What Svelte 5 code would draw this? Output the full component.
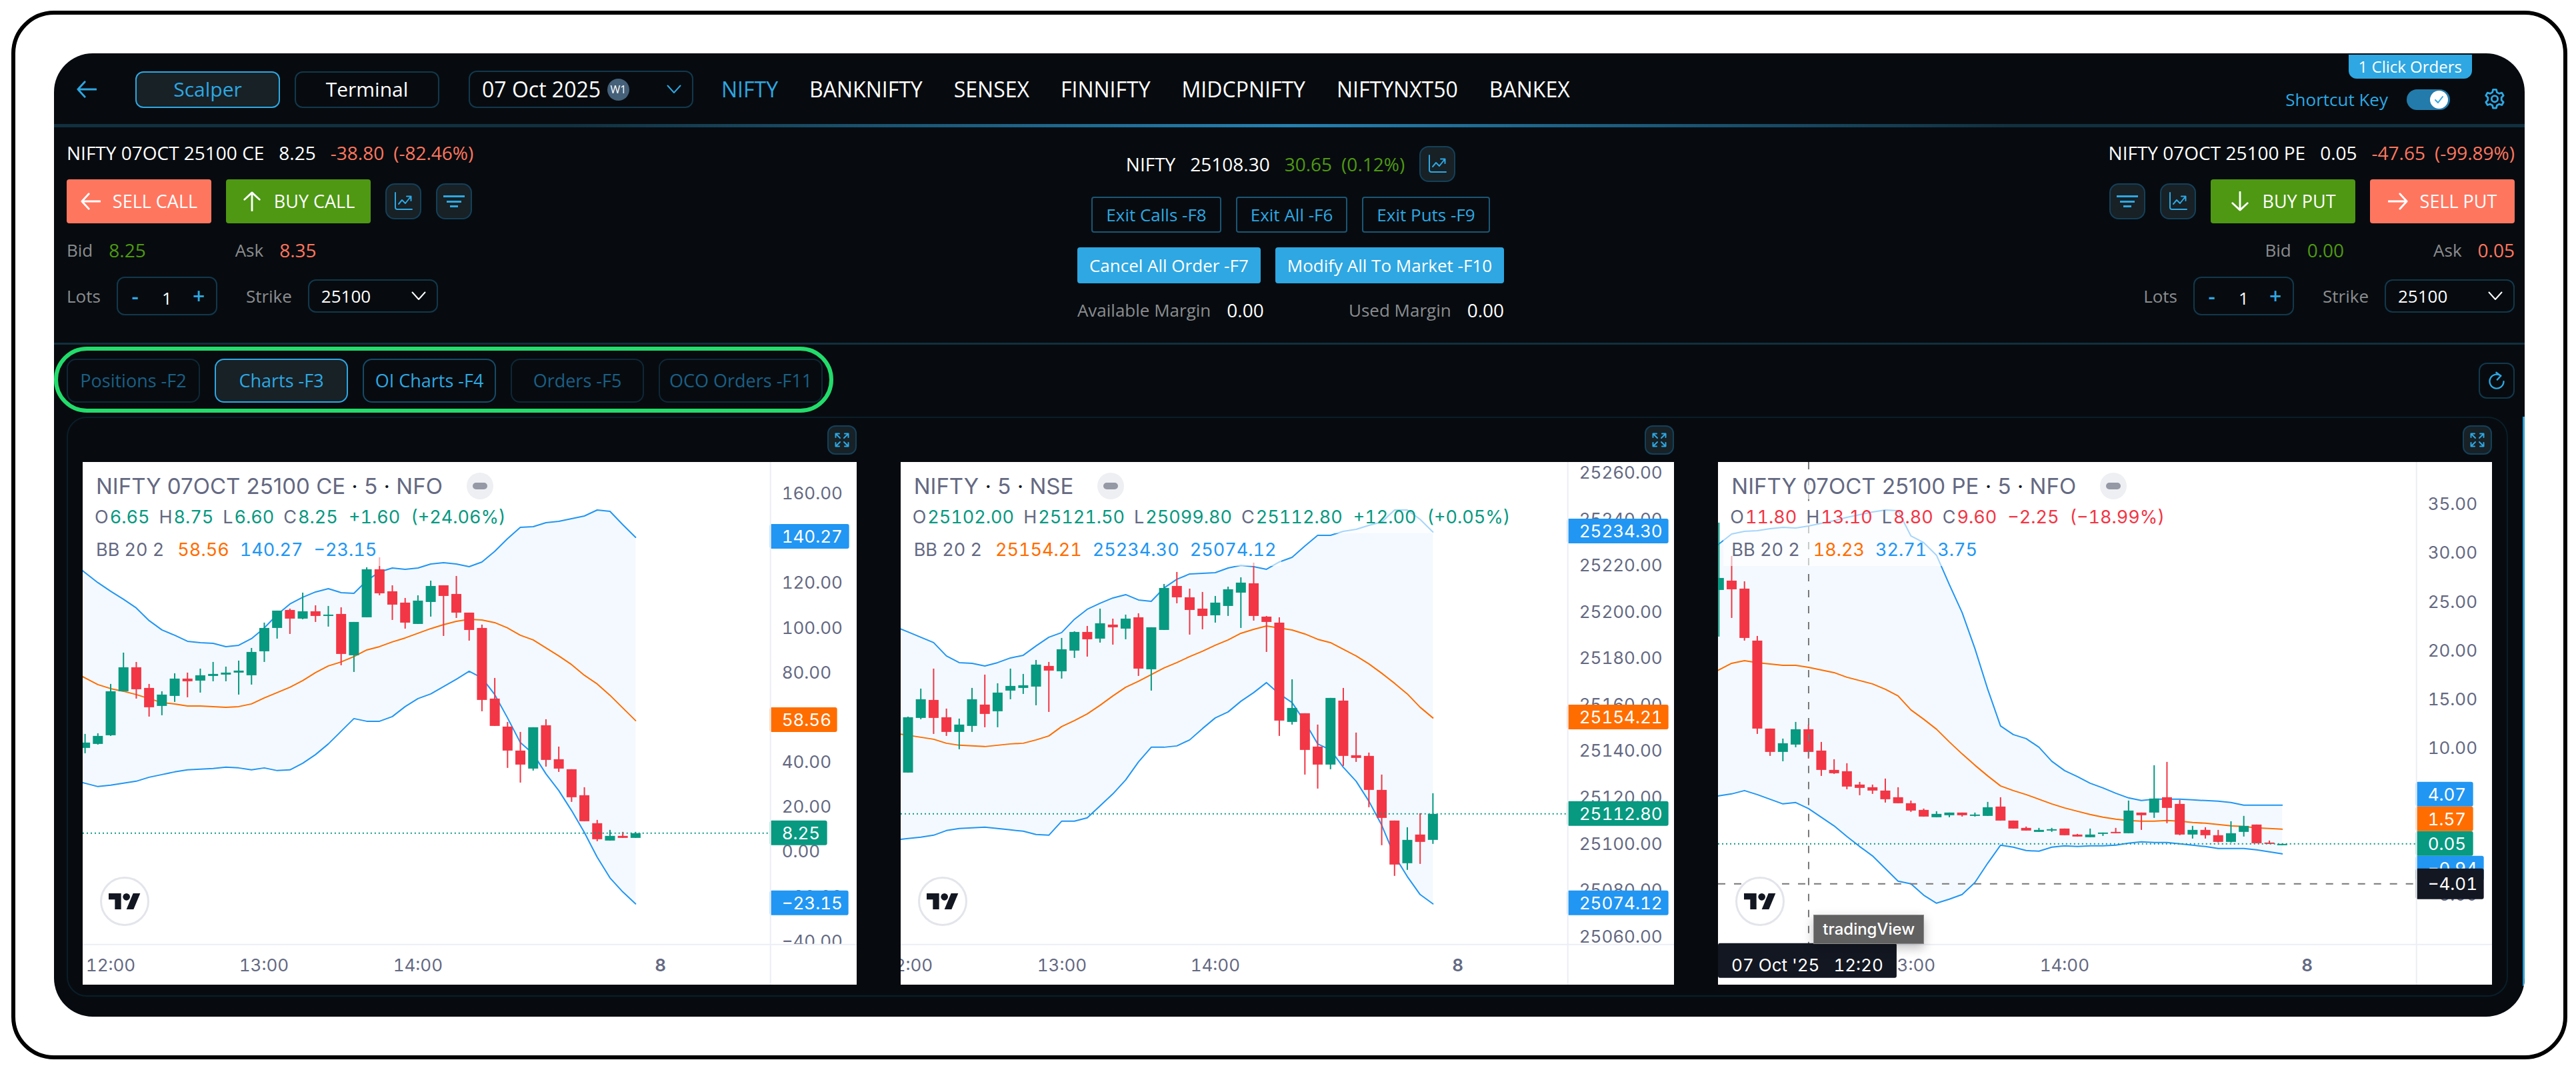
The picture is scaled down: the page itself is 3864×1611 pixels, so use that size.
<script lang="ts">
	type Candle = [dir: 'u' | 'd', high: number, top: number, bottom: number, low: number];
	type Tag = { y: number; text: string; color: string; w: number };

	interface Chart {
		id: string;
		title: string;
		market: string;
		trend: 'up' | 'down';
		ohlc: [string, string][];
		change: string[];
		bb: [string, string, string];
		start: number;
		axisX: number;
		price: number;
		candles: Candle[];
		upper: number[];
		middle: number[];
		lower: number[];
		labels: { y: number; text: string }[];
		tags: Tag[];
		times: { x: number; text: string; bold?: boolean }[];
		cursor?: { x: number; y: number; time: string; price: string };
	}

	const BAR = 19.21;
	const BLUE = '#2196f3';
	const ORANGE = '#ff6d00';
	const GREEN = '#089981';
	const RED = '#f23645';

	const symbols = ['NIFTY', 'BANKNIFTY', 'SENSEX', 'FINNIFTY', 'MIDCPNIFTY', 'NIFTYNXT50', 'BANKEX'];

	const tabs = [
		{ label: 'Positions -F2', state: 'dim' },
		{ label: 'Charts -F3', state: 'active' },
		{ label: 'OI Charts -F4', state: 'ready' },
		{ label: 'Orders -F5', state: 'dim' },
		{ label: 'OCO Orders -F11', state: 'dim' }
	];

	const call = { id: 'call', name: 'NIFTY 07OCT 25100 CE', ltp: '8.25', diff: '-38.80', pct: '(-82.46%)', bid: '8.25', ask: '8.35' };
	const put = { id: 'put', name: 'NIFTY 07OCT 25100 PE', ltp: '0.05', diff: '-47.65', pct: '(-99.89%)', bid: '0.00', ask: '0.05' };

	let symbol = $state('NIFTY');
	let tab = $state('Charts -F3');
	let shortcuts = $state(true);
	let lots = $state({ call: 1, put: 1 } as Record<string, number>);

	function scale(from: number, to: number, step: number, y: number, px: number) {
		const out = [];
		for (let v = from; v >= to; v -= step) {
			out.push({ y: y + ((from - v) / step) * px, text: v.toFixed(2).replace('-', '−') });
		}
		return out;
	}

	const charts: Chart[] = [
		{
			id: 'ce',
			title: 'NIFTY 07OCT 25100 CE',
			market: 'NFO',
			trend: 'up',
			ohlc: [['O', '6.65'], ['H', '8.75'], ['L', '6.60'], ['C', '8.25']],
			change: ['+1.60', '(+24.06%)'],
			bb: ['58.56', '140.27', '−23.15'],
			start: 3.6,
			axisX: 1032,
			price: 557,
			candles: [
				['u', 408, 421, 429, 437], ['u', 407, 411, 423, 424], ['u', 333, 344, 410, 411], ['u', 286, 308, 344, 344],
				['d', 300, 308, 341, 355], ['d', 333, 339, 368, 382], ['u', 344, 349, 366, 380], ['u', 317, 325, 351, 360],
				['d', 316, 325, 329, 353], ['u', 310, 320, 328, 346], ['u', 300, 318, 321, 329], ['u', 307, 316, 319, 329],
				['u', 298, 313, 316, 349], ['u', 279, 285, 320, 334], ['u', 241, 249, 284, 300], ['u', 223, 223, 249, 265],
				['d', 220, 222, 235, 258], ['u', 196, 224, 235, 236], ['d', 215, 224, 231, 240], ['u', 216, 229, 231, 247],
				['d', 218, 228, 288, 305], ['u', 240, 240, 290, 315], ['u', 158, 161, 233, 233], ['d', 143, 161, 197, 200],
				['d', 185, 194, 214, 237], ['d', 204, 211, 241, 250], ['u', 200, 208, 243, 243], ['u', 178, 186, 210, 232],
				['d', 185, 185, 201, 261], ['d', 171, 198, 226, 234], ['d', 226, 226, 252, 268], ['d', 244, 249, 357, 374],
				['d', 324, 355, 396, 396], ['d', 390, 397, 433, 459], ['d', 405, 433, 454, 481], ['u', 398, 398, 460, 463],
				['d', 386, 395, 447, 457], ['d', 427, 446, 460, 465], ['d', 461, 461, 503, 510], ['d', 488, 500, 539, 539],
				['d', 537, 542, 566, 569], ['u', 552, 561, 568, 568], ['d', 555, 561, 564, 564], ['u', 555, 557, 564, 564]
			],
			upper: [
				166, 181, 194, 206, 219, 238, 252, 260, 269, 271, 272, 277, 275, 265, 249, 229, 213, 203, 195, 190, 196, 197,
				178, 165, 159, 161, 159, 153, 151, 153, 157, 150, 134, 115, 98, 97, 91, 89, 85, 81, 72, 74, 94, 113
			],
			middle: [
				324, 334, 340, 344, 349, 355, 361, 363, 366, 366, 367, 368, 367, 363, 354, 346, 338, 328, 316, 306, 300, 292,
				282, 277, 270, 264, 257, 250, 244, 239, 236, 237, 241, 249, 260, 267, 279, 291, 304, 320, 333, 350, 369, 388
			],
			lower: [
				482, 487, 485, 482, 479, 473, 469, 465, 462, 461, 460, 458, 459, 462, 459, 463, 462, 452, 439, 423, 404, 385,
				389, 389, 382, 367, 355, 348, 337, 326, 314, 324, 349, 384, 421, 438, 468, 493, 523, 556, 593, 624, 645, 663
			],
			labels: scale(160, -40, 20, 47, 67.2),
			tags: [
				{ y: 112, text: '140.27', color: BLUE, w: 119 },
				{ y: 387, text: '58.56', color: ORANGE, w: 101 },
				{ y: 557, text: '8.25', color: GREEN, w: 86 },
				{ y: 662, text: '−23.15', color: BLUE, w: 118 }
			],
			times: [{ x: 42, text: '12:00' }, { x: 272, text: '13:00' }, { x: 503, text: '14:00' }, { x: 867, text: '8', bold: true }]
		},
		{
			id: 'index',
			title: 'NIFTY',
			market: 'NSE',
			trend: 'up',
			ohlc: [['O', '25102.00'], ['H', '25121.50'], ['L', '25099.80'], ['C', '25112.80']],
			change: ['+12.00', '(+0.05%)'],
			bb: ['25154.21', '25234.30', '25074.12'],
			start: 11,
			axisX: 1001,
			price: 528,
			candles: [
				['u', 382, 383, 466, 466], ['u', 340, 356, 384, 386], ['d', 310, 357, 384, 408], ['d', 370, 383, 405, 411],
				['u', 385, 394, 405, 431], ['u', 339, 356, 396, 405], ['d', 319, 364, 378, 398], ['u', 332, 346, 374, 398],
				['u', 310, 336, 343, 356], ['u', 318, 335, 339, 348], ['u', 297, 304, 337, 365], ['d', 300, 306, 313, 375],
				['u', 264, 281, 314, 325], ['u', 254, 255, 283, 294], ['d', 246, 255, 266, 292], ['u', 220, 242, 265, 271],
				['d', 235, 244, 248, 274], ['u', 229, 235, 250, 266], ['d', 227, 233, 310, 321], ['u', 248, 248, 311, 343],
				['u', 183, 189, 252, 252], ['d', 165, 186, 203, 212], ['d', 190, 203, 222, 259], ['d', 195, 220, 231, 251],
				['u', 201, 211, 230, 241], ['u', 187, 191, 216, 231], ['u', 173, 181, 196, 249], ['d', 151, 182, 231, 238],
				['d', 231, 232, 240, 285], ['d', 233, 241, 388, 411], ['u', 326, 369, 390, 394], ['d', 377, 377, 432, 469],
				['d', 394, 427, 454, 490], ['u', 354, 354, 454, 461], ['d', 339, 358, 441, 456], ['d', 406, 440, 444, 450],
				['d', 436, 441, 492, 518], ['d', 469, 492, 534, 575], ['d', 538, 538, 604, 621], ['u', 548, 567, 602, 612],
				['d', 527, 559, 570, 603], ['u', 497, 528, 567, 573]
			],
			upper: [
				255, 263, 271, 291, 301, 302, 306, 301, 294, 290, 276, 263, 256, 236, 221, 212, 204, 199, 207, 209, 189, 176,
				168, 167, 166, 159, 155, 157, 161, 150, 143, 126, 110, 110, 104, 101, 95, 90, 72, 72, 86, 105
			],
			middle: [
				410, 413, 416, 422, 425, 426, 427, 425, 423, 422, 417, 411, 397, 388, 378, 365, 351, 338, 329, 319, 309, 301,
				292, 284, 275, 267, 257, 251, 246, 249, 252, 258, 266, 271, 281, 291, 303, 317, 332, 348, 368, 384
			],
			lower: [
				565, 563, 560, 553, 550, 549, 548, 550, 552, 554, 559, 560, 539, 539, 534, 516, 498, 477, 450, 428, 428, 426,
				417, 400, 384, 375, 359, 346, 331, 348, 361, 390, 423, 432, 458, 479, 509, 545, 591, 622, 649, 663
			],
			labels: scale(25260, 25060, 20, 16, 69.6),
			tags: [
				{ y: 104, text: '25234.30', color: BLUE, w: 152 },
				{ y: 383, text: '25154.21', color: ORANGE, w: 152 },
				{ y: 528, text: '25112.80', color: GREEN, w: 152 },
				{ y: 662, text: '25074.12', color: BLUE, w: 152 }
			],
			times: [{ x: 11, text: '12:00' }, { x: 242, text: '13:00' }, { x: 472, text: '14:00' }, { x: 836, text: '8', bold: true }]
		},
		{
			id: 'pe',
			title: 'NIFTY 07OCT 25100 PE',
			market: 'NFO',
			trend: 'down',
			ohlc: [['O', '11.80'], ['H', '13.10'], ['L', '8.80'], ['C', '9.60']],
			change: ['−2.25', '(−18.99%)'],
			bb: ['18.23', '32.71', '3.75'],
			start: 1.3,
			axisX: 1048,
			price: 573,
			candles: [
				['u', 91, 174, 192, 262], ['d', 141, 178, 191, 234], ['d', 179, 190, 264, 268], ['d', 261, 268, 400, 408],
				['d', 400, 400, 435, 441], ['u', 415, 422, 435, 449], ['u', 390, 401, 424, 428], ['d', 394, 401, 435, 445],
				['d', 420, 433, 462, 471], ['d', 446, 462, 467, 468], ['d', 452, 464, 487, 491], ['d', 480, 484, 489, 500],
				['d', 484, 488, 493, 498], ['d', 475, 493, 506, 511], ['d', 488, 503, 512, 512], ['d', 508, 512, 523, 525],
				['d', 520, 522, 532, 532], ['u', 524, 528, 533, 533], ['u', 526, 526, 530, 533], ['d', 526, 526, 530, 532],
				['u', 526, 529, 531, 532], ['u', 510, 518, 531, 531], ['d', 503, 517, 538, 538], ['d', 538, 538, 550, 550],
				['d', 547, 549, 553, 553], ['u', 549, 552, 555, 555], ['u', 549, 551, 553, 555], ['d', 550, 550, 560, 560],
				['d', 558, 559, 562, 562], ['u', 550, 559, 563, 563], ['u', 556, 556, 558, 561], ['d', 549, 555, 557, 557],
				['u', 508, 523, 557, 557], ['d', 526, 526, 530, 552], ['u', 455, 505, 526, 534], ['d', 450, 503, 519, 542],
				['d', 507, 513, 559, 560], ['u', 546, 552, 559, 565], ['d', 548, 552, 560, 565], ['d', 552, 560, 570, 571],
				['u', 539, 557, 570, 571], ['u', 531, 546, 555, 562], ['d', 544, 544, 572, 572], ['d', 568, 571, 573, 573],
				['u', 573, 573, 575, 575]
			],
			upper: [
				123, 108, 104, 103, 100, 98, 99, 96, 92, 88, 83, 79, 75, 72, 73, 111, 121, 140, 184, 226, 280, 341, 396, 409,
				415, 428, 449, 463, 472, 482, 489, 497, 504, 508, 506, 506, 506, 507, 508, 509, 511, 515, 515, 515, 515
			],
			middle: [
				312, 302, 298, 301, 303, 305, 305, 308, 312, 316, 323, 328, 333, 341, 351, 372, 386, 401, 420, 438, 455, 471,
				486, 493, 499, 506, 513, 519, 524, 529, 533, 536, 538, 539, 539, 538, 539, 541, 542, 544, 546, 547, 549, 550, 551
			],
			lower: [
				501, 498, 493, 499, 506, 513, 511, 520, 533, 546, 562, 577, 591, 610, 629, 633, 650, 662, 656, 649, 631, 602,
				575, 578, 583, 584, 578, 576, 577, 576, 576, 575, 572, 570, 571, 571, 573, 575, 577, 580, 580, 580, 582, 585, 588
			],
			labels: scale(35, -5, 5, 63, 73.3),
			tags: [
				{ y: 610, text: '−0.94', color: BLUE, w: 102 },
				{ y: 499, text: '4.07', color: BLUE, w: 86 },
				{ y: 536, text: '1.57', color: ORANGE, w: 86 },
				{ y: 573, text: '0.05', color: GREEN, w: 86 }
			],
			times: [{ x: 289, text: '13:00' }, { x: 520, text: '14:00' }, { x: 884, text: '8', bold: true }],
			cursor: { x: 136, y: 633, time: "07 Oct '25   12:20", price: '−4.01' }
		}
	];

	function points(c: Chart, ys: number[]) {
		// bands run off the left edge of the plot
		const lead = ys[0] - ((ys[1] - ys[0]) * c.start) / BAR;
		return [[0, lead], ...ys.map((y, i) => [c.start + i * BAR, y])].map(([x, y]) => `${x.toFixed(1)},${y.toFixed(1)}`);
	}

	function bandArea(c: Chart) {
		return [...points(c, c.upper), ...points(c, c.lower).reverse()].join(' ');
	}
</script>

{#snippet trendIcon()}
	<svg class="icon" viewBox="0 0 28 28" aria-hidden="true">
		<path d="M2 1v22q0 3 3 3h22" />
		<path d="M7 18l5-6 5 5 8-10M19 6.500h6.500V13" />
	</svg>
{/snippet}

{#snippet filterIcon()}
	<svg class="icon icon--bold" viewBox="0 0 32 32" aria-hidden="true"><path d="M0 8.500h32M5 16.500h22M10 23.500h12" /></svg>
{/snippet}

{#snippet chevron()}
	<svg class="chevron" viewBox="0 0 22 14" aria-hidden="true"><path d="M1.500 1.500 11 12l9.500-10.500" /></svg>
{/snippet}

{#snippet arrow(turn: number)}
	<svg class="arrow" viewBox="0 0 32 32" aria-hidden="true">
		<path transform="rotate({turn} 16 16)" d="M31 16H2M13 4 2 16l11 12" />
	</svg>
{/snippet}

{#snippet quickButtons(mirrored: boolean)}
	{#if mirrored}
		<button type="button" class="icon-button" aria-label="Market depth">{@render filterIcon()}</button>
		<button type="button" class="icon-button" aria-label="Open chart">{@render trendIcon()}</button>
	{:else}
		<button type="button" class="icon-button" aria-label="Open chart">{@render trendIcon()}</button>
		<button type="button" class="icon-button" aria-label="Market depth">{@render filterIcon()}</button>
	{/if}
{/snippet}

{#snippet leg(side: typeof call)}
	<section class="leg leg--{side.id}">
		<div class="quote">
			<span>{side.name}</span>
			<span>{side.ltp}</span>
			<span class="quote__move fall"><span>{side.diff}</span><span>{side.pct}</span></span>
		</div>
		<div class="leg__row">
			{#if side.id === 'call'}
				<button type="button" class="trade trade--sell">{@render arrow(0)}SELL CALL</button>
				<button type="button" class="trade trade--buy">{@render arrow(90)}BUY CALL</button>
				{@render quickButtons(false)}
			{:else}
				{@render quickButtons(true)}
				<button type="button" class="trade trade--buy">{@render arrow(270)}BUY PUT</button>
				<button type="button" class="trade trade--sell">{@render arrow(180)}SELL PUT</button>
			{/if}
		</div>
		<div class="depth">
			<span class="pair"><span class="muted">Bid</span><span class="value rise">{side.bid}</span></span>
			<span class="pair"><span class="muted">Ask</span><span class="value fall">{side.ask}</span></span>
		</div>
		<div class="inputs">
			<div class="pair">
				<label class="muted" for="lots-{side.id}">Lots</label>
				<div class="stepper">
					<button type="button" aria-label="Fewer lots" onclick={() => (lots[side.id] = Math.max(1, lots[side.id] - 1))}>-</button>
					<input id="lots-{side.id}" type="text" inputmode="numeric" bind:value={lots[side.id]} />
					<button type="button" aria-label="More lots" onclick={() => (lots[side.id] += 1)}>+</button>
				</div>
			</div>
			<div class="pair">
				<label class="muted" for="strike-{side.id}">Strike</label>
				<div class="select select--strike">
					<select id="strike-{side.id}"><option>25100</option></select>
					{@render chevron()}
				</div>
			</div>
		</div>
	</section>
{/snippet}

<div class="frame">
	<main class="app">
		<header class="topbar">
			<a class="back" href="#back" aria-label="Back">{@render arrow(0)}</a>
			<div class="modes">
				<button type="button" class="mode mode--active">Scalper</button>
				<button type="button" class="mode">Terminal</button>
			</div>
			<div class="select select--expiry">
				<select aria-label="Expiry"><option>07 Oct 2025</option></select>
				<span class="week">W1</span>
				{@render chevron()}
			</div>
			<nav class="symbols">
				{#each symbols as name}
					<a href="#{name}" class:current={symbol === name} onclick={() => (symbol = name)}>{name}</a>
				{/each}
			</nav>
			<div class="settings">
				<label for="shortcuts">Shortcut Key</label>
				<span class="toggle">
					<input id="shortcuts" type="checkbox" bind:checked={shortcuts} />
					<svg viewBox="0 0 27 27" aria-hidden="true"><circle cx="13.500" cy="13.500" r="13.500" /><path d="m8 14 4 4 7-9" /></svg>
				</span>
				<button type="button" class="gear" aria-label="Settings">
					<svg viewBox="0 0 24 24" aria-hidden="true">
						<path d="M10.300 1.700h3.400l.7 2.900 2.300 1.300 2.900-.9 1.700 3-2.100 2.100v2.800l2.100 2.100-1.700 3-2.900-.9-2.300 1.300-.7 2.900h-3.400l-.7-2.900-2.300-1.300-2.900.9-1.700-3 2.100-2.100V10.100L2.700 8l1.700-3 2.900.9 2.300-1.300z" />
						<circle cx="12" cy="11.500" r="3.300" />
					</svg>
				</button>
			</div>
			<span class="ribbon">1 Click Orders</span>
		</header>

		<div class="desk">
			{@render leg(call)}
			<section class="summary">
				<div class="summary__row">
					<div class="quote">
						<span>NIFTY</span>
						<span>25108.30</span>
						<span class="quote__move rise"><span>30.65</span><span>(0.12%)</span></span>
					</div>
					<button type="button" class="icon-button" aria-label="Open chart">{@render trendIcon()}</button>
				</div>
				<div class="summary__row">
					<button type="button" class="action">Exit Calls -F8</button>
					<button type="button" class="action">Exit All -F6</button>
					<button type="button" class="action">Exit Puts -F9</button>
				</div>
				<div class="summary__row">
					<button type="button" class="action action--solid">Cancel All Order -F7</button>
					<button type="button" class="action action--solid">Modify All To Market -F10</button>
				</div>
				<div class="margins">
					<span class="pair"><span class="muted">Available Margin</span><span class="value">0.00</span></span>
					<span class="pair"><span class="muted">Used Margin</span><span class="value">0.00</span></span>
				</div>
			</section>
			{@render leg(put)}
		</div>

		<div class="toolbar">
			<div class="tabs">
				{#each tabs as t}
					<button type="button" class="tab tab--{t.state}" aria-pressed={tab === t.label} onclick={() => (tab = t.label)}>{t.label}</button>
				{/each}
			</div>
			<button type="button" class="refresh" aria-label="Refresh">
				<svg viewBox="0 0 24 24" aria-hidden="true"><path d="M17.500 5.800A9 9 0 1 0 21 13M11.500 1.500l5.800 4.300-4.600 5" /></svg>
			</button>
		</div>

		<div class="workspace">
			<div class="charts">
				{#each charts as c (c.id)}
					<article class="chart">
						<button type="button" class="expand" aria-label="Expand chart">
							<svg viewBox="0 0 22 22" aria-hidden="true">
								<path d="M1.500 7V1.500H7M1.500 1.500 8 8M15 1.500h5.500V7M20.500 1.500 14 8M1.500 15v5.500H7M1.500 20.500 8 14M15 20.500h5.500V15M20.500 20.500 14 14" />
							</svg>
						</button>
						<div class="plot">
							<svg class="plot__canvas" viewBox="0 0 1161 784" role="img" aria-label="{c.title} price chart">
								<polygon class="band" points={bandArea(c)} />
								<polyline class="line" stroke={ORANGE} points={points(c, c.middle).join(' ')} />
								<polyline class="line" stroke={BLUE} points={points(c, c.upper).join(' ')} />
								<polyline class="line" stroke={BLUE} points={points(c, c.lower).join(' ')} />
								{#each c.candles as [dir, high, top, bottom, low], i}
									<g fill={dir === 'u' ? GREEN : RED}>
										<rect x={c.start + i * BAR - 1} y={high} width="2" height={low - high} />
										<rect x={c.start + i * BAR - 7.5} y={top} width="15" height={Math.max(2, bottom - top)} />
									</g>
								{/each}
								<line class="last" x1="0" x2={c.axisX} y1={c.price} y2={c.price} />
								{#if c.cursor}
									<path class="cross" d="M{c.cursor.x} 0V724M0 {c.cursor.y}H{c.axisX}" />
								{/if}
								{#each c.labels as l}
									<text class="axis" x={c.axisX + 17} y={l.y + 9}>{l.text}</text>
								{/each}
								{#each c.tags as t}
									<rect x={c.axisX - 1} y={t.y - 19} width={t.w} height="37" rx="3" fill={t.color} />
									<text class="axis axis--tag" x={c.axisX + 17} y={t.y + 9}>{t.text}</text>
								{/each}
								{#if c.cursor}
									<rect x={c.axisX - 1} y={c.cursor.y - 23} width="102" height="46" rx="3" fill="#131722" />
									<text class="axis axis--tag" x={c.axisX + 17} y={c.cursor.y + 9}>{c.cursor.price}</text>
								{/if}
								<rect x="0" y="724" width="1161" height="60" fill="#fff" />
								<path class="rule" d="M{c.axisX} 0V784M0 724H1161" />
								{#each c.times as t}
									<text class="axis axis--time" class:axis--bold={t.bold} x={t.x} y="764">{t.text}</text>
								{/each}
								{#if c.cursor}
									<rect x="0" y="722" width="268" height="52" rx="3" fill="#131722" />
									<text class="axis axis--tag axis--time" x="134" y="764" xml:space="preserve">{c.cursor.time}</text>
								{/if}
							</svg>
							<div class="legend">
								<div class="legend__title">
									<span>{c.title} <i>·</i> 5 <i>·</i> {c.market}</span>
									<button type="button" aria-label="Hide legend"></button>
								</div>
								<div class="legend__row legend__row--{c.trend}">
									{#each c.ohlc as [key, val]}
										<span>{key}<b>{val}</b></span>
									{/each}
									<b>{c.change[0]}</b>
									<b>{c.change[1]}</b>
								</div>
								<div class="legend__row legend__row--bands">
									<span class="legend__name">BB 20 2</span>
									<span class="mid">{c.bb[0]}</span>
									<span class="outer">{c.bb[1]}</span>
									<span class="outer">{c.bb[2]}</span>
								</div>
							</div>
							<a class="brand" href="#tradingview" aria-label="TradingView">
								<svg viewBox="0 0 36 18" aria-hidden="true">
									<path d="M14 18H7V7H0V0h14v18zM28 18h-8l7.500-18h8z" /><circle cx="20" cy="4" r="4" />
								</svg>
							</a>
							{#if c.cursor}
								<span class="tooltip" role="tooltip">tradingView</span>
							{/if}
						</div>
					</article>
				{/each}
			</div>
		</div>
	</main>
</div>

<style>
	:global(body) {
		background: #fff;
	}

	.frame {
		--accent: #2ea7e2;
		--edge: #12384c;
		--fill: #172126;
		--fall: #ff765f;
		--rise: #4e9813;
		margin: 16px 13px 22px 17px;
		padding: 58px;
		border: 6px solid #000;
		border-radius: 64px;
	}

	.app {
		position: relative;
		overflow: hidden;
		padding-bottom: 30px;
		border-radius: 58px;
		background: #070b0f;
		color: #fff;
		font-family: 'Open Sans', 'Noto Sans', sans-serif;
		font-size: 26px;
		line-height: 36px;
	}

	button,
	input,
	select {
		box-sizing: border-box;
		margin: 0;
		padding: 0;
		border: 0;
		background: none;
		color: inherit;
		font: inherit;
	}

	button {
		display: inline-flex;
		align-items: center;
		justify-content: center;
		cursor: pointer;
	}

	a {
		color: inherit;
		text-decoration: none;
	}

	svg {
		display: block;
		fill: none;
		stroke-linecap: round;
		stroke-linejoin: round;
	}

	/* top bar */
	.topbar {
		display: flex;
		align-items: center;
		height: 106px;
		padding: 2px 28px 0 34px;
		box-sizing: border-box;
		font-size: 32px;
	}

	.back {
		margin-right: 58px;
		color: var(--accent);
	}

	.arrow {
		width: 30px;
		height: 30px;
		stroke: currentColor;
		stroke-width: 3;
	}

	.modes {
		display: flex;
		gap: 22px;
		margin-right: 44px;
		font-size: 30px;
	}

	.mode {
		width: 217px;
		height: 55px;
		border: 2px solid var(--edge);
		border-radius: 12px;
	}

	.mode--active {
		border-color: var(--accent);
		background: var(--fill);
		color: var(--accent);
	}

	.select {
		position: relative;
		display: flex;
		align-items: center;
	}

	.select select {
		width: 100%;
		height: 100%;
		padding-left: 18px;
		border: 2px solid var(--edge);
		border-radius: 12px;
		appearance: none;
	}

	.select--expiry {
		width: 337px;
		height: 56px;
		margin-right: 42px;
	}

	.select--strike {
		width: 195px;
		height: 50px;
	}

	.chevron {
		position: absolute;
		right: 18px;
		width: 22px;
		height: 14px;
		stroke: currentColor;
		stroke-width: 2;
		pointer-events: none;
	}

	.select--expiry .chevron {
		color: var(--accent);
	}

	.week {
		position: absolute;
		left: 208px;
		width: 33px;
		border-radius: 50%;
		background: #456079;
		font-size: 16px;
		line-height: 33px;
		text-align: center;
		pointer-events: none;
	}

	.symbols {
		display: flex;
		gap: 47px;
	}

	.symbols .current {
		color: var(--accent);
	}

	.settings {
		display: flex;
		align-items: center;
		margin-left: auto;
		padding-top: 30px;
		color: var(--accent);
		font-size: 26px;
	}

	.toggle {
		display: flex;
		position: relative;
		margin: 0 50px 0 28px;
	}

	.toggle input {
		width: 65px;
		height: 31px;
		border-radius: 16px;
		background: #237bab;
		appearance: none;
		cursor: pointer;
	}

	.toggle svg {
		position: absolute;
		top: 2px;
		left: 3px;
		width: 27px;
		height: 27px;
		pointer-events: none;
	}

	.toggle input:checked + svg {
		left: 35px;
	}

	.toggle circle {
		fill: #fff;
	}

	.toggle path {
		stroke: var(--accent);
		stroke-width: 2;
	}

	.gear svg {
		width: 34px;
		height: 34px;
		stroke: currentColor;
		stroke-width: 2;
	}

	.ribbon {
		position: absolute;
		top: 2px;
		right: 79px;
		padding: 0 15px;
		border-radius: 0 0 12px 12px;
		background: var(--accent);
		font-size: 24px;
	}

	/* order desk */
	.desk {
		display: grid;
		grid-template-columns: 1fr auto 1fr;
		padding: 25px 15px 31px 19px;
		position: relative;
		border-bottom: 3px solid #12303f;
	}

	.desk::before {
		content: '';
		position: absolute;
		top: 0;
		left: 0;
		width: 100%;
		height: 5px;
		background: linear-gradient(90deg, #12303f 21%, #2580b0 50%, #12303f 79%);
	}

	.leg,
	.summary {
		display: flex;
		flex-direction: column;
		gap: 22px;
	}

	.leg--put {
		align-items: flex-end;
	}

	.summary {
		align-items: center;
		padding-top: 8px;
	}

	.quote,
	.leg__row,
	.summary__row {
		display: flex;
		align-items: center;
		gap: 22px;
	}

	.quote {
		font-size: 28px;
	}

	.quote__move {
		display: flex;
		gap: 14px;
	}

	.pair {
		display: flex;
		align-items: center;
		gap: 24px;
	}

	.rise {
		color: var(--rise);
	}

	.fall {
		color: var(--fall);
	}

	.muted {
		color: #8b8d90;
	}

	.value {
		font-size: 28px;
	}

	.trade {
		gap: 18px;
		width: 217px;
		height: 66px;
		border-radius: 4px;
		font-size: 27px;
	}

	.trade--sell {
		background: var(--fall);
	}

	.trade--buy {
		background: var(--rise);
	}

	.icon-button {
		width: 54px;
		height: 54px;
		border: 2px solid #15405a;
		border-radius: 14px;
		background: var(--fill);
		color: var(--accent);
	}

	.icon {
		width: 28px;
		height: 28px;
		stroke: currentColor;
		stroke-width: 2;
	}

	.icon--bold {
		width: 32px;
		height: 32px;
		stroke-width: 3;
		stroke-linecap: butt;
	}

	.depth {
		display: flex;
		gap: 134px;
	}

	.inputs {
		display: flex;
		gap: 43px;
	}

	.stepper {
		display: flex;
		align-items: center;
		width: 151px;
		height: 58px;
		border: 2px solid var(--edge);
		border-radius: 12px;
		box-sizing: border-box;
	}

	.stepper button {
		flex: 1;
		color: var(--accent);
		font-size: 32px;
		font-weight: 600;
	}

	.stepper input {
		width: 44px;
		padding-top: 6px;
		text-align: center;
	}

	.action {
		height: 54px;
		padding: 0 20px;
		border: 2px solid #1c5675;
		border-radius: 4px;
		color: var(--accent);
	}

	.action--solid {
		padding: 0 16px;
		border-color: var(--accent);
		background: var(--accent);
		color: #fff;
	}

	.margins {
		display: flex;
		justify-content: space-between;
		width: 100%;
	}

	/* tabs */
	.toolbar {
		display: flex;
		align-items: center;
		justify-content: space-between;
		padding: 21px 15px 21px 19px;
	}

	.tabs {
		display: flex;
		position: relative;
		gap: 22px;
		font-size: 27px;
	}

	.tabs::before {
		content: '';
		position: absolute;
		inset: -18px -16px -15px -19px;
		border: 6px solid #22dc6b;
		border-radius: 50px;
		pointer-events: none;
	}

	.tab {
		min-width: 200px;
		height: 66px;
		padding: 0 14px;
		border: 2px solid #0f2736;
		border-radius: 14px;
		color: #1b5f85;
	}

	.tab--active {
		border-color: var(--accent);
		background: var(--fill);
		color: var(--accent);
	}

	.tab--ready {
		border-color: #174a66;
		color: var(--accent);
	}

	.refresh {
		width: 54px;
		height: 54px;
		border: 2px solid var(--edge);
		border-radius: 12px;
		color: var(--accent);
	}

	.refresh svg {
		width: 28px;
		height: 28px;
		stroke: currentColor;
		stroke-width: 2;
	}

	/* charts */
	.workspace {
		position: relative;
		padding: 0 25px 0 19px;
	}

	.workspace::after {
		content: '';
		position: absolute;
		top: 0;
		right: 0;
		bottom: 16px;
		width: 3px;
		background: #2f9fd6;
	}

	.charts {
		display: grid;
		grid-template-columns: repeat(3, minmax(0, 1fr));
		gap: 66px;
		padding: 11px 22px 16px 22px;
		border: 2px solid #0a1e29;
		border-radius: 30px;
	}

	.chart {
		display: flex;
		flex-direction: column;
		align-items: flex-end;
		gap: 11px;
	}

	.expand {
		width: 44px;
		height: 44px;
		border: 2px solid #15405a;
		border-radius: 12px;
		background: var(--fill);
		color: var(--accent);
	}

	.expand svg {
		width: 22px;
		height: 22px;
		stroke: currentColor;
		stroke-width: 2;
	}

	.plot {
		position: relative;
		width: 100%;
		background: #fff;
		font-family: Inter, 'Liberation Sans', sans-serif;
	}

	.plot__canvas {
		width: 100%;
		height: auto;
		overflow: hidden;
		font-variant-numeric: tabular-nums;
	}

	.band {
		fill: #f4f9ff;
	}

	.line {
		stroke-width: 2;
	}

	.last {
		stroke: #089981;
		stroke-width: 2;
		stroke-dasharray: 2 4;
		stroke-linecap: butt;
	}

	.cross {
		stroke: #777;
		stroke-width: 2;
		stroke-dasharray: 11 13;
		stroke-linecap: butt;
	}

	.rule {
		stroke: #eceef4;
		stroke-width: 2;
		stroke-linecap: butt;
	}

	.axis {
		fill: #646982;
		font-size: 26px;
	}

	.axis--tag {
		fill: #fff;
	}

	.axis--time {
		text-anchor: middle;
	}

	.axis--bold {
		font-weight: 600;
	}

	.legend {
		position: absolute;
		top: 16px;
		left: 8px;
		color: #646982;
	}

	.legend__title {
		display: flex;
		align-items: center;
		gap: 36px;
		width: fit-content;
		margin-bottom: 2px;
		padding-left: 12px;
		background: rgb(255 255 255 / 60%);
		font-size: 33px;
		line-height: 40px;
	}

	.legend__title i {
		color: #131722;
		font-style: normal;
	}

	.legend__title button {
		width: 40px;
		height: 40px;
		border-radius: 50%;
		background: #eeeff2;
	}

	.legend__title button::before {
		content: '';
		width: 22px;
		height: 10px;
		border-radius: 5px;
		background: #9598a5;
	}

	.legend__row {
		display: flex;
		gap: 14px;
		width: fit-content;
		padding: 0 8px 0 10px;
		background: rgb(255 255 255 / 60%);
		font-size: 27px;
		font-variant-numeric: tabular-nums;
		line-height: 49px;
	}

	.legend__row--bands {
		gap: 16px;
		padding-left: 12px;
	}

	.legend__row b {
		margin-left: 2px;
		font-weight: 400;
	}

	.legend__row--up b {
		color: #089981;
	}

	.legend__row--down b {
		color: #f23645;
	}

	.legend__name {
		margin-right: 4px;
	}

	.mid {
		color: #ff6d00;
	}

	.outer {
		color: #2196f3;
	}

	.brand {
		position: absolute;
		bottom: 88px;
		left: 26px;
		display: flex;
		align-items: center;
		justify-content: center;
		width: 68px;
		height: 68px;
		border: 3px solid #e3e5ea;
		border-radius: 50%;
		background: #fff;
	}

	.brand svg {
		width: 48px;
		height: 24px;
		fill: #131722;
	}

	.tooltip {
		position: absolute;
		bottom: 61px;
		left: 143px;
		padding: 0 13px;
		border: 1px solid #8a8a8a;
		background: #616161;
		box-shadow: 0 6px 16px rgb(0 0 0 / 25%);
		color: #fff;
		font-size: 24px;
		font-weight: 500;
		line-height: 42px;
	}
</style>
